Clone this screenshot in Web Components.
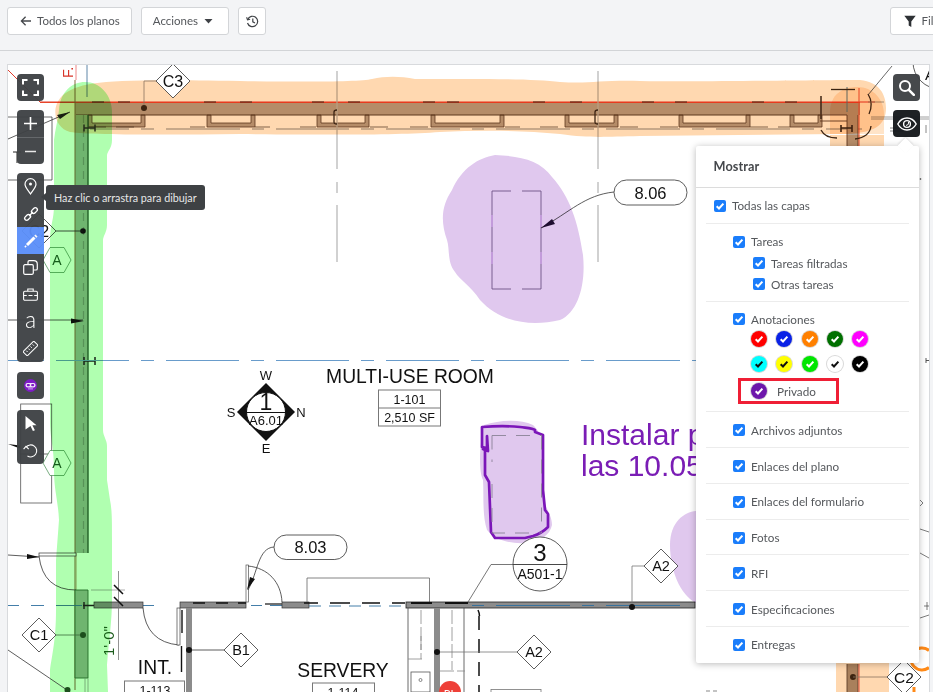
<!DOCTYPE html>
<html lang="es">
<head>
<meta charset="utf-8">
<title>Planos</title>
<style>
html,body{margin:0;padding:0;height:100%;overflow:hidden;background:#f3f4f6}
body{font-family:Lato,"Liberation Sans",sans-serif}
</style>
</head>
<body>
<app-shell>
  <top-bar>
    <ui-button slot="start" icon="back">Todos los planos</ui-button>
    <ui-button slot="start" icon="caret">Acciones</ui-button>
    <ui-button slot="start" icon="history"></ui-button>
    <ui-button slot="end" icon="filter">Filtros</ui-button>
  </top-bar>
  <plan-viewer>
    <plan-sheet></plan-sheet>
    <tool-column slot="left">
      <tool-group><tool-button icon="fit"></tool-button></tool-group>
      <tool-group>
        <tool-button icon="plus"></tool-button>
        <tool-button icon="minus" divided></tool-button>
      </tool-group>
      <tool-group>
        <tool-button icon="pin"></tool-button>
        <tool-button icon="link"></tool-button>
        <tool-button icon="pencil" active></tool-button>
        <tool-button icon="copy"></tool-button>
        <tool-button icon="case"></tool-button>
        <tool-button icon="text"></tool-button>
        <tool-button icon="ruler"></tool-button>
      </tool-group>
      <tool-group style="margin-top:1px"><tool-button icon="mask"></tool-button></tool-group>
      <tool-group style="margin-top:2px">
        <tool-button icon="cursor"></tool-button>
        <tool-button icon="undo"></tool-button>
      </tool-group>
    </tool-column>
    <hint-tip slot="overlay">Haz clic o arrastra para dibujar</hint-tip>
    <tool-column slot="right">
      <tool-group><tool-button icon="search"></tool-button></tool-group>
      <tool-group><tool-button icon="eye" dark></tool-button></tool-group>
    </tool-column>
    <layers-popover slot="overlay">
      <layer-section>
        <layer-row>Todas las capas</layer-row>
      </layer-section>
      <layer-section inset>
        <layer-row>Tareas</layer-row>
        <layer-row sub>Tareas filtradas</layer-row>
        <layer-row sub>Otras tareas</layer-row>
      </layer-section>
      <layer-section inset>
        <layer-row>Anotaciones</layer-row>
        <color-grid>
          <color-dot color="#ff0000"></color-dot>
          <color-dot color="#0a22e6"></color-dot>
          <color-dot color="#ff8000"></color-dot>
          <color-dot color="#007000"></color-dot>
          <color-dot color="#ff00ff"></color-dot>
          <color-dot color="#00ffff" dark></color-dot>
          <color-dot color="#ffff00" dark></color-dot>
          <color-dot color="#00e600"></color-dot>
          <color-dot color="#ffffff" dark></color-dot>
          <color-dot color="#000000"></color-dot>
        </color-grid>
        <private-row>Privado</private-row>
      </layer-section>
      <layer-section inset><layer-row>Archivos adjuntos</layer-row></layer-section>
      <layer-section inset><layer-row>Enlaces del plano</layer-row></layer-section>
      <layer-section inset><layer-row>Enlaces del formulario</layer-row></layer-section>
      <layer-section inset><layer-row>Fotos</layer-row></layer-section>
      <layer-section inset><layer-row>RFI</layer-row></layer-section>
      <layer-section inset><layer-row>Especificaciones</layer-row></layer-section>
      <layer-section inset last><layer-row>Entregas</layer-row></layer-section>
    </layers-popover>
  </plan-viewer>
</app-shell>

<script>
const ICONS = {
  back:'<svg width="12" height="12" viewBox="0 0 12 12" fill="none" stroke="#45484c" stroke-width="1.3"><path d="M11 6H1.6M5.6 1.8 1.4 6l4.2 4.2"/></svg>',
  caret:'<svg width="9" height="5" viewBox="0 0 9 5"><path d="M.5 0h8L4.5 4.6z" fill="#3f4246"/></svg>',
  history:'<svg width="13" height="13" viewBox="0 0 13 13" fill="none" stroke="#3f4246" stroke-width="1.2"><path d="M1.7 4.4A5.2 5.2 0 1 1 1.5 8"/><path d="M.6 2.3l.9 2.6 2.6-.6" stroke-width="1.1"/><path d="M6.8 3.6v3.2l2.2 1.3"/></svg>',
  filter:'<svg width="12" height="12" viewBox="0 0 12 12"><path d="M.3.8h11.4L7.3 6.4V12L4.7 10.4v-4z" fill="#2e3135"/></svg>',
  fit:'<svg width="17" height="17" viewBox="0 0 17 17" fill="none" stroke="#fff" stroke-width="2"><path d="M1 5.500V1h4.500M11.500 1H16v4.500M16 11.500V16h-4.500M5.500 16H1v-4.500"/></svg>',
  plus:'<svg width="13" height="13" viewBox="0 0 13 13" stroke="#fff" stroke-width="1.600"><path d="M6.500 0v13M0 6.500h13"/></svg>',
  minus:'<svg width="11" height="3" viewBox="0 0 11 3" stroke="#e8e8e8" stroke-width="1.500"><path d="M0 1.500h11"/></svg>',
  pin:'<svg width="13" height="17" viewBox="0 0 13 17" fill="none" stroke="#fff" stroke-width="1.200"><path d="M6.500 16C3.500 11.500 1 9 1 6.200a5.500 5.500 0 0 1 11 0C12 9 9.500 11.500 6.500 16z"/><circle cx="6.500" cy="6" r="1.500" fill="#fff" stroke="none"/></svg>',
  link:'<svg width="16" height="16" viewBox="0 0 16 16" fill="none" stroke="#fff" stroke-width="1.300"><rect x="-3.300" y="-2" width="6.600" height="4" rx="2" transform="translate(4.600 11.400) rotate(-45)"/><rect x="-3.300" y="-2" width="6.600" height="4" rx="2" transform="translate(11.400 4.600) rotate(-45)"/><path d="M6 10l4-4"/></svg>',
  pencil:'<svg width="14" height="14" viewBox="0 0 14 14" fill="none" stroke="#fff"><path d="M3 11L10.500 3.500" stroke-width="3"/><path d="M11.300 2.700L12.500 1.500" stroke-width="3"/><path d="M.8 13.200L2.200 11.800" stroke-width="1.400"/></svg>',
  copy:'<svg width="15" height="15" viewBox="0 0 15 15" fill="none" stroke="#fff" stroke-width="1.200"><rect x=".7" y="4.700" width="9.600" height="9.600" rx="1.200"/><path d="M5 4.500V2A1.300 1.300 0 0 1 6.300.7h4.500a3.500 3.500 0 0 1 3.500 3.500v4.500A1.300 1.300 0 0 1 13 10h-2.500"/></svg>',
  case:'<svg width="15" height="13" viewBox="0 0 15 13" fill="none" stroke="#fff" stroke-width="1.100"><rect x=".6" y="3.200" width="13.800" height="9" rx="1.200"/><path d="M4.800 3V1h5.400v2M.6 7.500h3.200M11.200 7.500h3.200M5.500 7.500h4"/></svg>',
  ruler:'<svg width="15" height="15" viewBox="0 0 15 15" fill="none" stroke="#fff" stroke-width="1"><rect x="-7.600" y="-3" width="15.200" height="6" rx=".8" transform="translate(7.500 7.500) rotate(-45)"/><path d="M9.600 3.400l1.300 1.300M7.500 5.500l1.300 1.300M5.400 7.600l1.300 1.300M3.300 9.700l1.300 1.300"/></svg>',
  mask:'<svg width="13" height="13" viewBox="0 0 13 13"><circle cx="6.500" cy="6.500" r="6.500" fill="#7a12c4"/><rect x="1.500" y="4" width="10" height="4.400" rx="2" fill="#f2e6fb"/><rect x="2.800" y="5.100" width="3.100" height="2.100" rx="1" fill="#7a12c4"/><rect x="7.100" y="5.100" width="3.100" height="2.100" rx="1" fill="#7a12c4"/><path d="M4 9.900h5" stroke="#d8b8f0" stroke-width=".9"/></svg>',
  cursor:'<svg width="12" height="15" viewBox="0 0 12 15"><path d="M.5 0l11 9.200H7.400l2.500 5-2 .8-2.400-5.100L.5 13.500z" fill="#fff"/></svg>',
  undo:'<svg width="15" height="15" viewBox="0 0 15 15" fill="none" stroke="#fff" stroke-width="1.100"><path d="M3 4.200A6 6 0 1 1 4.500 13"/><path d="M.6 6.200L3 3.400 5.700 6.200" stroke-width="1.100"/></svg>',
  search:'<svg width="17" height="17" viewBox="0 0 17 17" fill="none" stroke="#fff"><circle cx="7" cy="7" r="5" stroke-width="2"/><path d="M10.800 10.800l5 5" stroke-width="2.600" stroke-linecap="round"/></svg>',
  eye:'<svg width="20" height="14" viewBox="0 0 20 14" fill="none" stroke="#fff" stroke-width="1.400"><path d="M.8 7C3 3 6 1 10 1s7 2 9.200 6C17 11 14 13 10 13S3 11 .8 7z"/><circle cx="10" cy="7" r="3.400"/><path d="M9 8.500a3 3 0 0 0 2.600-3.600" stroke-width="1"/></svg>'
};
const CHECK = c => `<svg viewBox="0 0 12 12" width="12" height="12" fill="none"><path d="M2.700 6.200 5 8.500l4.400-4.900" stroke="${c}" stroke-width="2"/></svg>`;

class AppShell extends HTMLElement{constructor(){super();this.attachShadow({mode:'open'}).innerHTML=`
<style>:host{display:flex;flex-direction:column;width:933px;height:692px;overflow:hidden;background:#f3f4f6;color:#45484c}</style><slot></slot>`}}

class TopBar extends HTMLElement{constructor(){super();this.attachShadow({mode:'open'}).innerHTML=`
<style>:host{display:flex;flex:none;border-bottom:1px solid #d2d4d7;padding:7px 0 0 7px;box-sizing:border-box;height:51px;justify-content:space-between;overflow:hidden}
.g{display:flex;gap:9px;align-items:flex-start}.e{margin-right:-32px}</style>
<div class="g"><slot name="start"></slot></div><div class="g e"><slot name="end"></slot></div>`}}

class UiButton extends HTMLElement{constructor(){super();const ic=this.getAttribute('icon');const caret=ic==='caret';
const empty=!this.textContent.trim();
const pad=empty?'0 6.5px':caret?'0 15px 0 11px':'0 11px 0 '+(ic==='filter'?'13px':'12px');
this.attachShadow({mode:'open'}).innerHTML=`
<style>:host{display:inline-flex;align-items:center;height:28px;box-sizing:border-box;border:1px solid #d3d5d8;border-radius:3px;background:#fff;padding:${pad};font:11.5px/1 Lato,"Liberation Sans",sans-serif;color:#54575b;gap:${caret?'6px':'5px'};white-space:nowrap;flex:none}
span.i{display:flex}</style>
${caret?'':`<span class="i">${ICONS[ic]||''}</span>`}<slot></slot>${caret?`<span class="i">${ICONS[ic]}</span>`:''}`}}

class PlanViewer extends HTMLElement{constructor(){super();this.attachShadow({mode:'open'}).innerHTML=`
<style>:host{display:block;position:relative;flex:1;min-height:0;margin:13px 3px 0 7px;border:1px solid #d8dadd;border-bottom:0;background:#fff;overflow:hidden}
.l{position:absolute;left:9px;top:9px}.r{position:absolute;left:885px;top:9px}</style>
<slot></slot><div class="l"><slot name="left"></slot></div><div class="r"><slot name="right"></slot></div><slot name="overlay"></slot>`}}

class ToolColumn extends HTMLElement{constructor(){super();this.attachShadow({mode:'open'}).innerHTML=`
<style>:host{display:flex;flex-direction:column;gap:9px;width:27px}</style><slot></slot>`}}
class ToolGroup extends HTMLElement{constructor(){super();this.attachShadow({mode:'open'}).innerHTML=`
<style>:host{display:flex;flex-direction:column;border-radius:4px;overflow:hidden;opacity:.96}</style><slot></slot>`}}
class ToolButton extends HTMLElement{constructor(){super();const ic=this.getAttribute('icon');
this.attachShadow({mode:'open'}).innerHTML=`
<style>:host{display:flex;align-items:center;justify-content:center;box-sizing:border-box;width:27px;height:27px;background:${this.hasAttribute('active')?'#5b8ff9':this.hasAttribute('dark')?'#15181c':'#3f4245'};color:#fff;font:300 23px/1 Lato,"Liberation Sans",sans-serif;${this.hasAttribute('divided')?'border-top:1px solid #5f6265;':''}}
svg{display:block}</style>${ic==='text'?'<span style="margin-top:-4px">a</span>':ICONS[ic]}`}}

class HintTip extends HTMLElement{constructor(){super();this.attachShadow({mode:'open'}).innerHTML=`
<style>:host{position:absolute;left:38px;top:120px;display:block;background:#3e4144;color:#e8e8e8;border-radius:3px;padding:0 8px;height:25px;font:10.75px/25px Lato,"Liberation Sans",sans-serif;white-space:nowrap}
:host::before{content:"";position:absolute;left:-5px;top:8px;border:4.5px solid transparent;border-left:0;border-right:5px solid #3e4144}</style><slot></slot>`}}

class LayersPopover extends HTMLElement{constructor(){super();this.attachShadow({mode:'open'}).innerHTML=`
<style>:host{position:absolute;left:688px;top:81px;width:223px;box-sizing:border-box;background:#fff;border-radius:2px;box-shadow:0 1px 7px rgba(0,0,0,.28);display:block;font:11.7px/1 Lato,"Liberation Sans",sans-serif;color:#55585c}
:host::before{content:"";position:absolute;left:204px;top:-6px;width:11px;height:11px;background:#fff;transform:rotate(45deg);box-shadow:-1px -1px 2px rgba(0,0,0,.1)}
h2{position:relative;margin:0;height:41px;line-height:41px;padding-left:17.5px;font-size:12.7px;font-weight:700;color:#45484c;border-bottom:1px solid #dcdcdc;letter-spacing:.1px}</style>
<h2>Mostrar</h2><slot></slot>`}}
class LayerSection extends HTMLElement{constructor(){super();const inset=this.hasAttribute('inset');const last=this.hasAttribute('last');
this.attachShadow({mode:'open'}).innerHTML=`
<style>:host{display:block;position:relative;padding:7.9px 10px}
.c{padding-left:${inset?'27px':'8px'};display:flex;flex-direction:column;gap:2px}
.d{position:absolute;left:10px;right:10px;bottom:0;height:1px;background:#ececec;display:${last?'none':'block'}}</style>
<div class="c"><slot></slot></div><div class="d"></div>`}}
class LayerRow extends HTMLElement{constructor(){super();const sub=this.hasAttribute('sub');
this.attachShadow({mode:'open'}).innerHTML=`
<style>:host{display:flex;align-items:center;gap:6px;height:${sub?19:20}px;padding-left:${sub?'20px':'0'};white-space:nowrap;line-height:19px}
.b{width:12px;height:12px;border-radius:2px;background:#1a7dfb;display:block;flex:none}svg{display:block}</style>
<span class="b">${CHECK('#fff')}</span><span><slot></slot></span>`}}
class ColorGrid extends HTMLElement{constructor(){super();this.attachShadow({mode:'open'}).innerHTML=`
<style>:host{display:grid;grid-template-columns:repeat(5,25.3px);row-gap:9px;margin-left:18px}</style><slot></slot>`}}
class ColorDot extends HTMLElement{constructor(){super();const c=this.getAttribute('color');
this.attachShadow({mode:'open'}).innerHTML=`
<style>:host{display:flex;align-items:center;justify-content:center;width:16px;height:16px;border-radius:50%;background:${c};box-shadow:0 0 0 1px #d9d9d9}</style>${CHECK(this.hasAttribute('dark')?'#111':'#fff')}`}}
class PrivateRow extends HTMLElement{constructor(){super();
this.attachShadow({mode:'open'}).innerHTML=`
<style>:host{display:flex;align-items:center;box-sizing:border-box;width:101px;height:26px;border:3px solid #ef1f35;margin:4px 0 0 5px;padding-left:10px;gap:10px}
i{width:16px;height:16px;border-radius:50%;background:#6d17ab;display:flex;align-items:center;justify-content:center;box-shadow:0 0 0 1px #d9d9d9;flex:none}</style>
<i>${CHECK('#fff')}</i><slot></slot>`}}

const T='font-family="Liberation Sans,Arial,sans-serif"';
const diamond=(x,y,label,fs=16,h=17)=>`<path d="M${x} ${y-h}L${x+h} ${y}L${x} ${y+h}L${x-h} ${y}Z" fill="#fff" stroke="#333" stroke-width=".8"/><text x="${x}" y="${y+fs*.36}" font-size="${fs}" text-anchor="middle" ${T} fill="#111">${label}</text>`;
const pill=(x,y,w,h,label)=>`<rect x="${x}" y="${y}" width="${w}" height="${h}" rx="${h/2}" fill="#fff" stroke="#333" stroke-width=".8"/><text x="${x+w/2}" y="${y+h/2+6}" font-size="16.5" text-anchor="middle" ${T} fill="#111">${label}</text>`;
const hex=(x,y)=>`<path d="M${x-14} ${y}l7 -12.5h14l7 12.5l-7 12.5h-14z" fill="#fff" stroke="#3f8a4a" stroke-width=".7"/><text x="${x}" y="${y+5}" font-size="14" text-anchor="middle" ${T} fill="#1d5c25">A</text>`;
const pocket=(a,b)=>`<path d="M${a} 115V127H${b}V115H${b-4}V123H${a+4}V115Z" fill="#b5a597" stroke="#5d4029" stroke-width=".8"/>`;
const pockets=[[88,145],[207,255],[317,369],[431,504],[565,618],[679,750],[790,822]].map(p=>pocket(...p)).join('');

class PlanSheet extends HTMLElement{constructor(){super();
this.attachShadow({mode:'open'}).innerHTML=`
<style>:host{display:block;width:921px;height:627px}svg{display:block}.m{mix-blend-mode:multiply}</style>
<svg width="921" height="627" viewBox="8 65 921 627" fill="none">
<rect x="8" y="65" width="921" height="627" fill="#fff"/>
<path d="M8 70l32 32H875" stroke="#e23a2a" stroke-width="1"/>
<path d="M76 65v15" stroke="#e88" stroke-width="1"/>
<text transform="translate(73 78) rotate(-90)" font-size="14.5" ${T} fill="#d8352a">F.</text>
<path d="M87 65v32" stroke="#5f86a8" stroke-width="1"/>
<path d="M8 117H52V180H8" stroke="#444" stroke-width=".8"/>
<path d="M8 139L70 112" stroke="#333" stroke-width=".8"/><path d="M70 112l-13 3 3 4z" fill="#222"/>
<path d="M13 152h8M17 152v11" stroke="#222" stroke-width="1"/>
<rect x="75" y="102" width="785" height="13" fill="#b5a597"/>
<path d="M40 102.5H860" stroke="#e8452a" stroke-width="1"/>
<path d="M92 102H104M118 102H130M204 102H216M240 102H252M312 102H324M348 102H360M423 102H435M447 102H459M533 102H545M570 102H582M642 102H654M675 102H687M752 102H764M785 102H797" stroke="#3c2a1a" stroke-width="1"/>
${pockets}
<path d="M76 115H820" stroke="#5d4029" stroke-width="1"/>
<path d="M88 127H140M190 127H205M255 127H270M300 127H316M370 127H395M410 127H430M505 127H520M540 127H565M620 127H640M660 127H680M750 127H790" stroke="#4a3a2a" stroke-width=".7" stroke-dasharray="18 10"/>
<path d="M90 129H129M141 129H154M166 129H240M252 129H264M276 129H349M361 129H374M386 129H460M472 129H484M496 129H570M582 129H594M606 129H680M692 129H704M716 129H790M802 129H814M826 129H862" stroke="#8f8f8f" stroke-width="1.2"/>
<rect x="75" y="115" width="13" height="438" fill="#a1b5a1"/>
<path d="M75 80V690" stroke="#8a6a40" stroke-width="1"/>
<path d="M88 115V553" stroke="#2f5f35" stroke-width="1.4"/>
<path d="M83.5 115V553" stroke="#7e927e" stroke-width="1.2" stroke-dasharray="8 6"/>
${diamond(39,231,'C2')}
<circle cx="83" cy="231" r="2.8" fill="#111"/><path d="M56 231H83" stroke="#222" stroke-width=".8"/>
<path d="M8 320H83" stroke="#333" stroke-width=".8"/><path d="M84 321l-13 -2.5v5z" fill="#111"/>
<path d="M84 128H95M84 124.5v7M95 124.5v7" stroke="#333" stroke-width="1.5"/>
<path d="M84 361H95M84 357v8M95 357v8" stroke="#222" stroke-width="1.5"/>
<path d="M8 360.5H19M31 360.5H44M56 360.5H129M141 360.5H154M166 360.5H239M251 360.5H264M276 360.5H349M361 360.5H374M386 360.5H459M471 360.5H484M496 360.5H569M581 360.5H594M606 360.5H680M692 360.5H696" stroke="#699ccb" stroke-width="1.1"/>
<rect x="20.7" y="404" width="31" height="99" stroke="#555" stroke-width=".8"/>
<path d="M8 444l12 1.5v3z" fill="#111"/>
<path d="M20 454H52M52 454L46 462" stroke="#444" stroke-width=".8"/>
${hex(57,260)}
${hex(57,463)}
<path d="M337 71V169M337 182V193M337 205V262M598 71V169M598 182V193M598 205V262" stroke="#b9b9b9" stroke-width="1.3"/>
<path d="M337 110c-3 0-3 1-3 2v10c0 2 1 2 3 2M598 110c-3 0-3 1-3 2v10c0 2 1 2 3 2" stroke="#3c2a1a" stroke-width="1.3"/>
<path d="M511 191H492V289H511M522 191H541V289H522" stroke="#7d6a90" stroke-width=".9"/>
<path d="M492 215V227M541 215V227M492 252V264M541 252V264" stroke="#e0c8ee" stroke-width="1.8"/>
<path d="M614 192C585 195 570 212 541 228" stroke="#333" stroke-width=".8"/><path d="M541 228l14 -4 -3 -5z" fill="#221033"/>
<rect x="847" y="115" width="11" height="32" fill="#b5a597"/>
<path d="M847 115V147M858 115V147" stroke="#5d4029" stroke-width=".9"/>
<path d="M859 88V147" stroke="#e8553a" stroke-width="1"/>
<path d="M847 87V112" stroke="#5f86a8" stroke-width="1"/>
<path d="M821 96V119" stroke="#3c2a1a" stroke-width="1.5"/>
<path d="M831 89.5H855" stroke="#3c2a1a" stroke-width="1.3"/>
<path d="M868 94c4 6 4 14 1 20" stroke="#3c2a1a" stroke-width="1.3"/>
<path d="M821 130c3 6 9 8 16 8M871 126c-1 8-8 12-16 13" stroke="#3c2a1a" stroke-width="1.3"/>
<path d="M820 115H847M820 121H847" stroke="#5d4029" stroke-width=".9"/>
<path d="M841 128H852M841 125v7M852 125v7" stroke="#3c2a1a" stroke-width="1.6"/>
<path d="M868 102H884M871 117H929M871 119H929" stroke="#888" stroke-width=".8"/>
<path d="M868 95L892 66" stroke="#444" stroke-width=".8"/>
<circle cx="940" cy="62" r="27" stroke="#333" stroke-width=".8"/>
<text x="925" y="80" font-size="15" ${T} fill="#111">A</text>
<path d="M890 128H903M890 131H903M926 125v8" stroke="#888" stroke-width="1"/>
<path d="M76 553V590" stroke="#b49a70" stroke-width="1"/>
<rect x="39" y="553" width="37" height="3" fill="#fff" stroke="#333" stroke-width=".7"/>
<path d="M8 555L39 557" stroke="#333" stroke-width=".8"/><path d="M39 557l-12 -3v5z" fill="#111"/>
<path d="M39 556Q43 590 76 590" stroke="#333" stroke-width=".8"/>
<path d="M91 590H125" stroke="#999" stroke-width=".8"/>
<rect x="75" y="590" width="13" height="88" fill="#a1b5a1"/>
<path d="M75 590V678H88V590Z" stroke="#2f6b35" stroke-width=".9"/>
<path d="M85 678V692M88 678V692" stroke="#999" stroke-width=".8"/>
<path d="M8 605.5H19M31 605.5H44M56 605.5H82M112 605.5H129M141 605.5H154" stroke="#2f6f9f" stroke-width=".9"/>
<rect x="94" y="602" width="49" height="6" fill="#8c8c8c" stroke="#333" stroke-width=".7"/>
<path d="M83 605.5H94M84 602v7" stroke="#222" stroke-width="1.4"/>
<path d="M118.5 571V660" stroke="#777" stroke-width=".8"/>
<path d="M114 585l9 9M114 597l9 9" stroke="#111" stroke-width="1.5"/>
<text transform="translate(114 656) rotate(-90)" font-size="15" ${T} fill="#1c5c1c">1'-0"</text>
<path d="M143 608Q146 642 179 645" stroke="#333" stroke-width=".8"/>
<rect x="177" y="608" width="3" height="37" fill="#fff" stroke="#444" stroke-width=".7"/>
<rect x="180" y="602" width="66" height="6" fill="#8c8c8c" stroke="#333" stroke-width=".7"/>
<rect x="186" y="608" width="6" height="84" fill="#8c8c8c"/>
<path d="M182 610V633M181.5 646V672" stroke="#111" stroke-width="1.4"/>
<path d="M193 603H205M216 603H228M238 603H246" stroke="#111" stroke-width="1.6"/>
<rect x="246" y="565" width="2.5" height="37" fill="#fff" stroke="#555" stroke-width=".7"/>
<path d="M248 566C268 568 281 582 282 602" stroke="#333" stroke-width=".8"/>
<path d="M274 547C258 548 258 572 248 590" stroke="#333" stroke-width=".8"/><path d="M247 590l8 -11 -5 -2z" fill="#111"/>
<path d="M251 605.5H262M270 605.5H282" stroke="#2f6f9f" stroke-width=".9"/>
<path d="M265 604H282" stroke="#111" stroke-width="1.2"/>
<rect x="282" y="602" width="27" height="6" fill="#8c8c8c" stroke="#333" stroke-width=".7"/>
<path d="M307 602V578H429.5V602" stroke="#666" stroke-width=".8"/>
<path d="M309 606H406" stroke="#2f6f9f" stroke-width=".9" stroke-dasharray="12 8"/>
<path d="M304 603H318M330 603H350M362 603H380M392 603H405" stroke="#111" stroke-width="1.6"/>
<rect x="406" y="602" width="289" height="6" fill="#8c8c8c" stroke="#222" stroke-width=".8"/>
<path d="M411 603H432M445 603H468" stroke="#111" stroke-width="1.8"/>
<path d="M472 605.5H484M496 605.5H570M582 605.5H594M606 605.5H680" stroke="#2f6f9f" stroke-width=".9"/>
<rect x="434" y="608" width="6" height="84" fill="#8c8c8c"/>
<path d="M408 608V692M464 608V692" stroke="#444" stroke-width=".8"/>
<path d="M421 610V650M408 659H422M421 636 V659M452 610V670M440 671H465" stroke="#888" stroke-width=".8" stroke-dasharray="14 3"/>
<path d="M478 610c1 2 1.5 3 1.5 6M479 616V692" stroke="#111" stroke-width="1.5" stroke-dasharray="14 9"/>
<rect x="411" y="672" width="19" height="20" stroke="#555" stroke-width=".8"/>
<circle cx="420.500" cy="680" r="1.5" stroke="#555" stroke-width=".7"/>
<rect x="491" y="689.5" width="50" height="4" stroke="#777" stroke-width=".8"/>
<path class="m" d="M62 96C80 80 110 79 240 81C300 82 360 82 372 79C385 76 400 76 415 79C460 79 530 78 560 82C590 84 600 80 640 81C700 82 820 80 860 80C880 82 886 95 886 108C886 125 875 134 840 134L640 136C600 137 590 138 560 134C520 130 480 130 440 132C400 135 340 135 240 134C170 135 90 135 70 132C55 128 50 108 62 96Z" fill="#ffd8b0"/>
<path class="m" d="M59 110C60 92 72 82 85 82C100 82 112 95 112 112V140C112 148 108 150 107 155V225C107 232 103 236 103 240V430C103 436 107 440 107 446V480L110 500C112 510 112 520 112 540V600C112 620 109 640 107 665L108 692H50V670C52 655 56 640 56 610V560L59 520C58 500 54 490 54 470C54 445 50 440 50 420V240C50 225 54 220 54 205V140C55 130 58 120 59 110Z" fill="#b0ffb0"/>
<path class="m" d="M830 112C830 95 842 87 857 87C874 87 884 100 884 115V134H830Z" fill="#ffe4c8"/>
<path class="m" d="M830 135H884V148H830Z" fill="#ffd8b0"/>
<path class="m" d="M836 660H889V692H836Z" fill="#ffd8b0"/>
<path class="m" d="M495 155C520 156 540 160 552 177C570 197 578 222 583 255C586 285 578 312 560 320C530 327 500 322 480 300C470 285 460 280 455 272C447 262 450 250 447 240C440 220 442 205 452 190C462 168 478 158 495 155Z" fill="#e0c8ee"/>
<path class="m" d="M484 425C500 420 520 419 533 425C540 432 544 440 544 460V500C546 510 552 515 552 525C550 535 540 542 525 543C510 544 495 540 487 530C482 515 484 495 483 480C478 470 480 440 484 425Z" fill="#e0c8ee"/>
<path class="m" d="M696 511C684 512 670 522 670 545C670 570 680 595 696 603Z" fill="#e0c8ee"/>
<path d="M156 81H144V108" stroke="#8a7460" stroke-width=".8"/><circle cx="144" cy="108" r="3" fill="#3c2410"/>
${diamond(173,81,'C3')}
<path d="M266 383L295 412L266 441L237 412Z" fill="#111"/>
<circle cx="266" cy="412" r="19.5" fill="#fff" stroke="#111"/>
<path d="M245 412.5H287" stroke="#111"/>
<text x="266" y="410" font-size="23" text-anchor="middle" ${T} fill="#111">1</text>
<text x="266" y="425" font-size="13" text-anchor="middle" ${T} fill="#111">A6.01</text>
<text x="266" y="379.500" font-size="13" text-anchor="middle" ${T} fill="#111">W</text>
<text x="266" y="453" font-size="13" text-anchor="middle" ${T} fill="#111">E</text>
<text x="231" y="417" font-size="13" text-anchor="middle" ${T} fill="#111">S</text>
<text x="301" y="417" font-size="13" text-anchor="middle" ${T} fill="#111">N</text>
<text x="410" y="383" font-size="19.3" text-anchor="middle" ${T} fill="#111">MULTI-USE ROOM</text>
<rect x="378.5" y="390" width="62" height="36" fill="#fff" stroke="#777"/><path d="M379 408H440" stroke="#777"/>
<text x="409.5" y="404" font-size="12.5" text-anchor="middle" ${T} fill="#111">1-101</text>
<text x="409.5" y="422" font-size="12.5" text-anchor="middle" ${T} fill="#111">2,510 SF</text>
<path d="M482 427C495 426 510 426 520 427C528 428 533 428 535 430V432L543 435V490L545 510L548 514V527C545 530 540 534 533 536L525 538H495L491 532L489 482L485 475V450L483 449L488 451L487 436V448L482 447Z" stroke="#7b16b8" stroke-width="2.7" stroke-linejoin="round"/>
<path d="M492 435.500H541.500M492 435.500V462M492 484V533H541.500M541.500 435.500V533" stroke="#8a8296" stroke-width=".9" stroke-dasharray="14 10"/>
<text x="581" y="445" font-size="30" ${T} fill="#7a1db5">Instalar p</text>
<text x="581" y="476" font-size="30" ${T} fill="#7a1db5">las 10.05</text>
${pill(614,180,73,25,'8.06')}
${pill(274,535,73,24.5,'8.03')}
<path d="M513 564.5H491L468 602" stroke="#555" stroke-width=".8"/>
<circle cx="540" cy="564" r="27" fill="#fff" stroke="#333" stroke-width=".8"/>
<path d="M513 564.5H567" stroke="#333" stroke-width=".9"/>
<text x="540" y="561" font-size="24" text-anchor="middle" ${T} fill="#111">3</text>
<text x="540" y="579" font-size="14" text-anchor="middle" ${T} fill="#111">A501-1</text>
<path d="M644 566H632V607" stroke="#777" stroke-width=".8"/><circle cx="632" cy="607" r="3" fill="#111"/>
${diamond(661,566,'A2',14.5)}
<path d="M189 650H224" stroke="#333" stroke-width=".8"/><circle cx="189" cy="650" r="3" fill="#111"/>
${diamond(241,650,'B1',14.5)}
<path d="M437 652H517" stroke="#777" stroke-width=".8"/><circle cx="437" cy="652" r="3" fill="#111"/>
${diamond(534,652,'A2',14.5)}
<path d="M56 635H83" stroke="#3a6b3a" stroke-width=".8"/><circle cx="83" cy="635" r="3" fill="#1d4f1d"/>
${diamond(39,635,'C1',14.5)}
<path d="M8 650L67 690" stroke="#333" stroke-width=".8"/><circle cx="67.5" cy="690" r="3" fill="#1d4f1d"/>
<text x="155" y="674" font-size="19.3" text-anchor="middle" ${T} fill="#111">INT.</text>
<rect x="124.5" y="681" width="60" height="20" fill="#fff" stroke="#777"/>
<text x="155" y="695" font-size="12.5" text-anchor="middle" ${T} fill="#111">1-113</text>
<text x="343" y="676.5" font-size="19.3" text-anchor="middle" ${T} fill="#111">SERVERY</text>
<rect x="312.5" y="683" width="62" height="20" fill="#fff" stroke="#777"/>
<text x="343" y="697" font-size="12.5" text-anchor="middle" ${T} fill="#111">1-114</text>
<circle cx="450" cy="692" r="11" fill="#ee4038"/>
<text x="450" y="698" font-size="11" text-anchor="middle" font-family="Lato,sans-serif" fill="#fff">PL</text>
<rect x="847" y="664" width="11" height="28" fill="#a9805c"/><path d="M847 664V692M858 664V692" stroke="#5d4029" stroke-width=".9"/>
<path d="M859 664V692" stroke="#e8553a"/>
<circle cx="853" cy="677" r="3" fill="#3c2410"/><path d="M853 677H888" stroke="#8a7460" stroke-width=".8"/>
${diamond(904,677,'C2',15.5)}
<path d="M929 650.500A11 11 0 1 0 929 667.500" stroke="#ff8a18" stroke-width="3"/>
<path d="M914 687V692" stroke="#ff8a18" stroke-width="3"/>
<path d="M706 691H720" stroke="#555" stroke-width=".7" stroke-dasharray="4 3"/>
<circle cx="920.5" cy="179" r=".8" fill="#333"/>
<path d="M926 358v5M926 360.5H929" stroke="#444" stroke-width=".9"/>
<path d="M920 500l3 3-3 3M920 529l9 3M920 553l9 5M927 602v8M924 606H929M920 618l9 -3" stroke="#444" stroke-width=".7"/>
</svg>`}}

for(const [n,c] of Object.entries({'app-shell':AppShell,'top-bar':TopBar,'ui-button':UiButton,'plan-viewer':PlanViewer,'tool-column':ToolColumn,'tool-group':ToolGroup,'tool-button':ToolButton,'hint-tip':HintTip,'layers-popover':LayersPopover,'layer-section':LayerSection,'layer-row':LayerRow,'color-grid':ColorGrid,'color-dot':ColorDot,'private-row':PrivateRow,'plan-sheet':PlanSheet})) customElements.define(n,c);
</script>
</body>
</html>
